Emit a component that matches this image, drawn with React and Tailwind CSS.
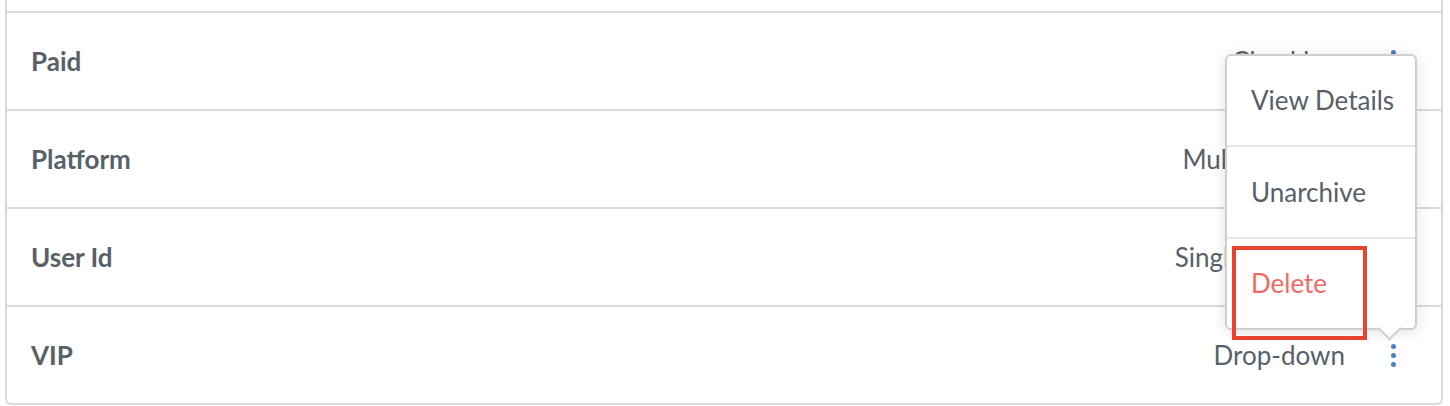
export default function App() {
  const rows = [
    { label: "Paid", value: "Checkbox" },
    { label: "Platform", value: "Multi-line text" },
    { label: "User Id", value: "Single-line text" },
    { label: "VIP", value: "Drop-down" },
  ];

  return (
    <div
      className="relative w-[1450px] h-[406px] bg-white overflow-hidden"
      style={{ fontFamily: "Lato, 'Open Sans', sans-serif" }}
    >
      {/* Card */}
      <div className="ml-[5px] w-[1438px] border-x-2 border-b-2 border-[#d9d9d9] rounded-b-md">
        <div className="h-[11px]" />
        {rows.map((row) => (
          <div
            key={row.label}
            className="flex items-center h-[98px] border-t-2 border-[#d9d9d9] pl-[24px] pr-[38px]"
          >
            <span className="text-[26px] font-bold text-[#586068]">{row.label}</span>
            <span className="ml-auto text-[26px] text-[#586068]">{row.value}</span>
            <span className="ml-[38px] w-[20px] flex flex-col items-center gap-[4px]">
              <span className="w-[5px] h-[5px] rounded-full bg-[#4a7fcf]" />
              <span className="w-[5px] h-[5px] rounded-full bg-[#4a7fcf]" />
              <span className="w-[5px] h-[5px] rounded-full bg-[#4a7fcf]" />
            </span>
          </div>
        ))}
      </div>

      {/* Dropdown menu */}
      <div className="absolute left-[1225px] top-[54px] w-[192px] bg-white border-2 border-[#cfcfcf] rounded-md shadow-[0_2px_14px_rgba(0,0,0,0.12)]">
        <div className="absolute left-[154px] bottom-[-9px] w-[17px] h-[17px] bg-white border-r-2 border-b-2 border-[#cfcfcf] rotate-45" />
        <div className="relative flex flex-col">
          <div className="h-[91px] flex items-center pl-[24px] text-[26px] text-[#586068] border-b-2 border-[#e6e6e6]">
            View Details
          </div>
          <div className="h-[92px] flex items-center pl-[24px] text-[26px] text-[#586068] border-b-2 border-[#e6e6e6]">
            Unarchive
          </div>
          <div className="h-[89px] flex items-center pl-[24px] text-[26px] text-[#f06b63]">
            Delete
          </div>
        </div>
      </div>

      {/* Annotation */}
      <div className="absolute left-[1232px] top-[246px] w-[135px] h-[94px] border-[4px] border-[#ea4230]" />
    </div>
  );
}
